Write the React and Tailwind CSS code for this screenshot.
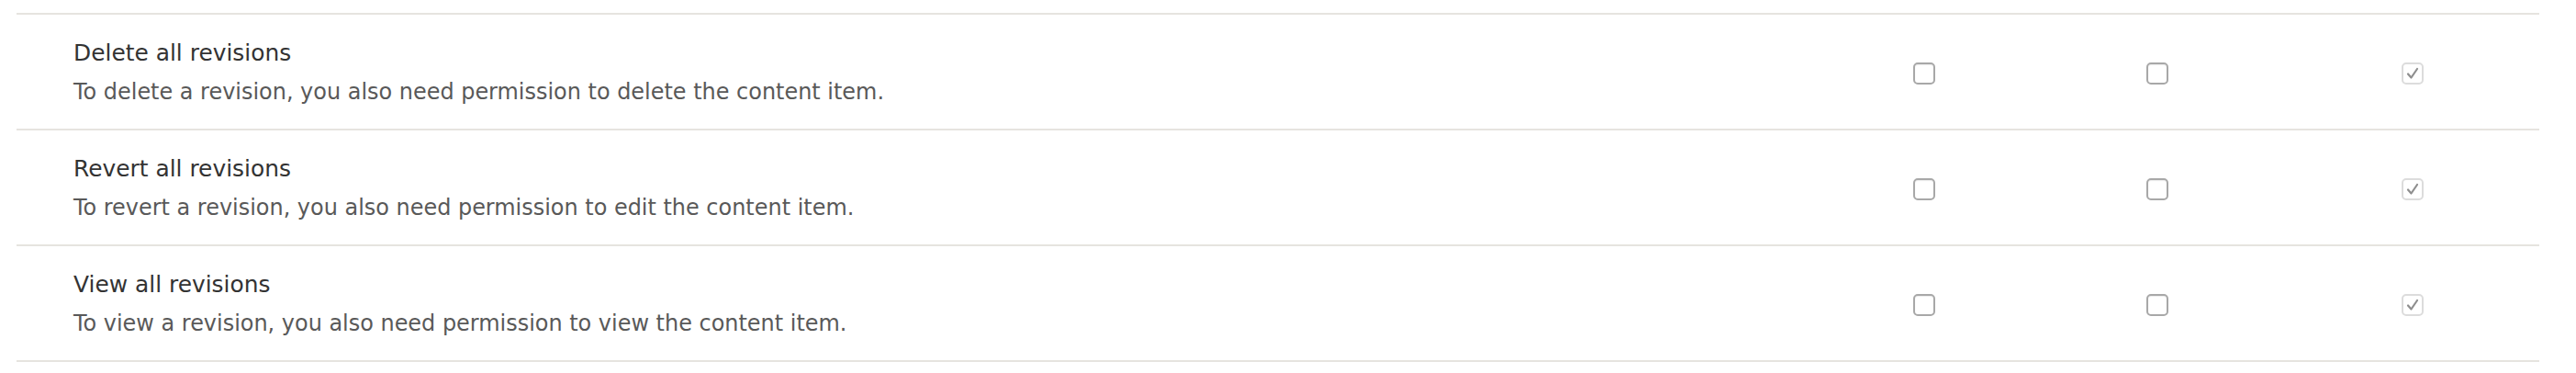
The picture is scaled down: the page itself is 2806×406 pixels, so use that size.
const rows = [
  {
    title: "Delete all revisions",
    description:
      "To delete a revision, you also need permission to delete the content item.",
  },
  {
    title: "Revert all revisions",
    description:
      "To revert a revision, you also need permission to edit the content item.",
  },
  {
    title: "View all revisions",
    description:
      "To view a revision, you also need permission to view the content item.",
  },
];

const Checkbox = ({ checked = false, disabled = false }) => {
  if (disabled) {
    return (
      <span className="flex items-center justify-center w-[24px] h-[24px] rounded-[5px] border-2 border-[#dcdcdc] bg-white">
        <svg width="16" height="16" viewBox="0 0 16 16" fill="none">
          {checked && (
            <path
              d="M3 8.5 L6.5 12.5 L13 3"
              stroke="#8e8e8e"
              strokeWidth="2.2"
              strokeLinecap="round"
              strokeLinejoin="round"
            />
          )}
        </svg>
      </span>
    );
  }
  return (
    <span className="block w-[24px] h-[24px] rounded-[5px] border-2 border-[#a8a8a8] bg-white shadow-[inset_0_1px_1px_rgba(0,0,0,0.08)]" />
  );
};

const PermissionRow = ({ title, description }) => (
  <div className="grid grid-cols-[1fr_228px_280px_276px] h-[126px] border-b-2 border-[#e6e4df]">
    <div className="pl-[62px] pt-[25px]">
      <div className="text-[24.9px] leading-[34px] text-[#333]">{title}</div>
      <div className="mt-[8px] text-[23.95px] leading-[34px] text-[#595959]">
        {description}
      </div>
    </div>
    <div className="flex justify-center pt-[52px]">
      <Checkbox />
    </div>
    <div className="flex justify-center pt-[52px]">
      <Checkbox />
    </div>
    <div className="flex justify-center pt-[52px]">
      <Checkbox checked disabled />
    </div>
  </div>
);

export default function App() {
  return (
    <div
      className="w-[2806px] h-[406px] bg-white pt-[14px] pl-[18px] pr-[40px]"
      style={{ fontFamily: '"DejaVu Sans", sans-serif' }}
    >
      <div className="border-t-2 border-[#e6e4df]">
        {rows.map((row) => (
          <PermissionRow key={row.title} {...row} />
        ))}
      </div>
    </div>
  );
}
